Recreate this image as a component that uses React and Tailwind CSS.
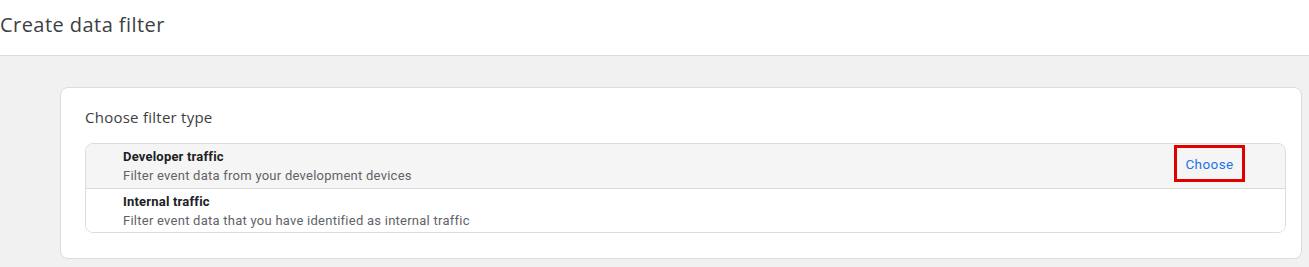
const rows = [
  {
    title: "Developer traffic",
    desc: "Filter event data from your development devices",
    active: true,
  },
  {
    title: "Internal traffic",
    desc: "Filter event data that you have identified as internal traffic",
    active: false,
  },
];

export default function App() {
  return (
    <div className="w-[1309px] h-[267px] overflow-hidden bg-[#f1f1f1] font-['Roboto',sans-serif]">
      {/* Page header */}
      <header className="h-[56px] bg-white border-b border-[#dadce0] flex items-start">
        <h1 className="pt-[11px] text-[20px] leading-[28px] text-[#3c4043] font-['Open_Sans',sans-serif] tracking-[0.45px]">
          Create data filter
        </h1>
      </header>

      <div className="pt-[31px] pl-[60px]">
        <div className="w-[1242px] bg-white border border-[#dadce0] rounded-[8px] pl-[24px] pt-[18px] pb-[25px]">
          <h2 className="text-[15px] leading-[22px] text-[#3c4043] font-['Open_Sans',sans-serif] tracking-[0.25px] mb-[15px]">
            Choose filter type
          </h2>

          {/* Filter type list */}
          <div className="w-[1201px] border border-[#dadce0] rounded-[8px] overflow-hidden">
            {rows.map((row, i) => (
              <div
                key={row.title}
                className={
                  "h-[44px] flex items-start pl-[37px] " +
                  (row.active ? "bg-[#f5f5f5]" : "bg-white") +
                  (i > 0 ? " border-t border-[#dadce0]" : "")
                }
              >
                <div className="flex-1 pt-[4px]">
                  <div className="text-[13px] leading-[17px] font-bold text-[#202124] tracking-[0.2px]">
                    {row.title}
                  </div>
                  <div className="mt-[2px] text-[13px] leading-[18px] text-[#5f6368] tracking-[0.25px]">
                    {row.desc}
                  </div>
                </div>
                {row.active && (
                  <button className="mt-[1px] mr-[40px] w-[71px] h-[37px] border-[3px] border-[#e00000] flex items-center justify-center pt-[2px] text-[13.5px] font-normal text-[#1a73e8] tracking-[0.4px]">
                    Choose
                  </button>
                )}
              </div>
            ))}
          </div>
        </div>
      </div>
    </div>
  );
}
